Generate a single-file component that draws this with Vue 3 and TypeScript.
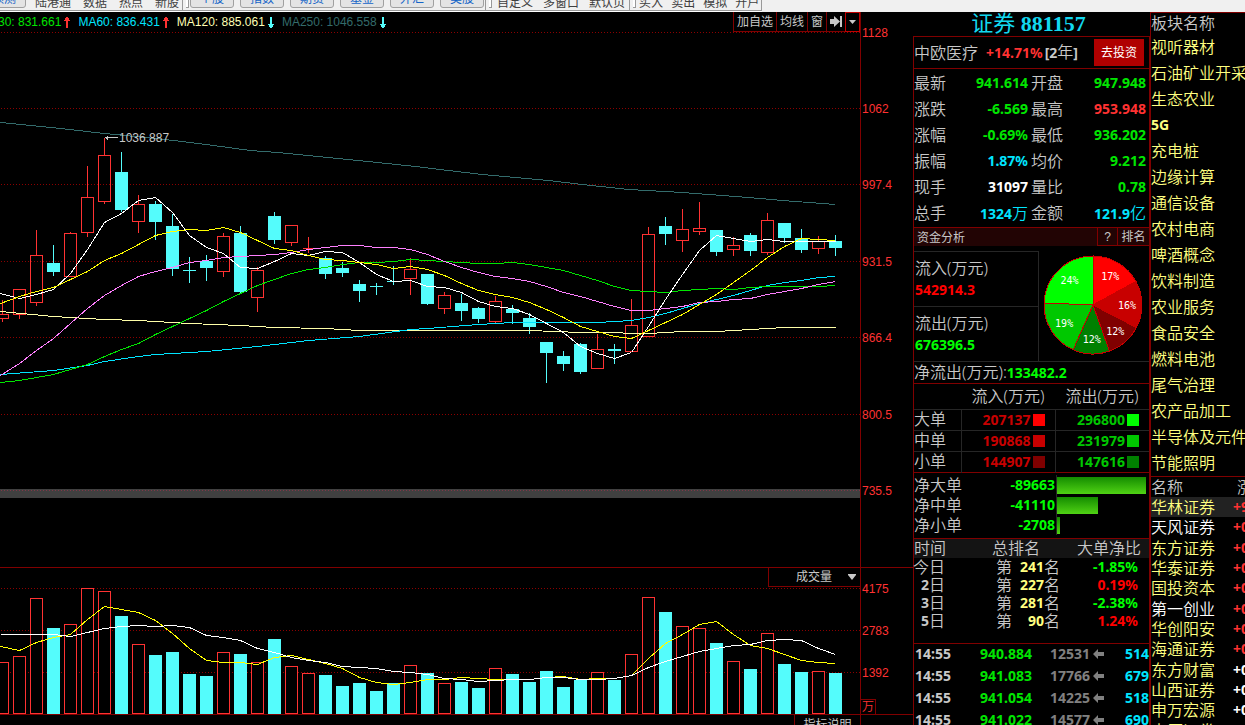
<script setup lang="ts">
type Candle = [high: number, top: number, bottom: number, low: number, up: 0 | 1, volume: number]

interface Line {
  color: string
  points: string
}

const STEP = 17
const FIRST = 2
const VOLUME_BASE = 713
const CHART_WIDTH = 860

const candles: Candle[] = [
  [299, 314, 318, 321, 1, 662], [289, 289, 314, 318, 1, 656], [229, 255, 302, 305, 1, 598],
  [244, 263, 272, 275, 0, 628], [231, 233, 276, 276, 1, 624], [165, 197, 232, 236, 1, 588],
  [137, 155, 201, 203, 1, 591], [151, 172, 210, 211, 0, 616], [194, 204, 221, 232, 1, 644],
  [200, 204, 222, 239, 0, 655], [213, 226, 269, 275, 0, 652], [256, 270, 271, 282, 0, 674],
  [254, 261, 268, 280, 0, 676], [232, 236, 271, 276, 1, 652], [225, 233, 292, 292, 0, 654],
  [266, 270, 297, 311, 1, 662], [211, 216, 240, 243, 0, 639], [225, 225, 242, 245, 1, 666],
  [236, 248, 248, 252, 1, 673], [255, 258, 274, 278, 0, 675], [261, 268, 273, 276, 0, 686],
  [279, 284, 291, 301, 0, 683], [282, 286, 287, 294, 0, 691], [265, 281, 282, 284, 0, 683],
  [257, 269, 278, 294, 1, 665], [274, 274, 304, 304, 0, 673], [291, 295, 308, 313, 1, 683],
  [293, 303, 311, 320, 0, 682], [306, 308, 319, 322, 0, 688], [295, 301, 321, 323, 1, 668],
  [304, 309, 313, 323, 0, 674], [312, 318, 327, 333, 0, 682], [342, 342, 353, 382, 0, 671],
  [350, 356, 364, 370, 0, 687], [342, 344, 372, 373, 0, 680], [333, 349, 368, 368, 1, 672],
  [343, 349, 351, 363, 0, 680], [298, 325, 351, 351, 1, 654], [226, 234, 336, 336, 1, 597],
  [216, 226, 234, 244, 0, 612], [208, 229, 240, 251, 1, 626], [201, 228, 231, 234, 1, 628],
  [229, 230, 252, 255, 0, 643], [236, 245, 249, 255, 1, 661], [232, 235, 251, 255, 0, 669],
  [212, 220, 252, 254, 1, 633], [223, 223, 238, 242, 0, 664], [228, 238, 250, 252, 0, 672],
  [235, 241, 248, 253, 1, 671], [234, 241, 248, 255, 0, 673],
]

const centre = (i: number): number => FIRST + STEP * i

function series(values: number[]): string {
  return values.map((y, i) => `${i === 0 ? 0 : centre(i)},${y}`).join(' ')
}

const priceLines: Line[] = [
  { color: '#336b6b', points: '0,122 60,128 104,133 155,138 182,141 213,145 250,150 277,152 317,156 347,159 377,162 415,166 448,170 482,174 515,177 548,180 582,184 628,189 682,192 748,197 782,200 835,204' },
  { color: '#ffffa8', points: '0,311 53,316 104,319 138,320 189,323 240,325 274,327 325,328 359,330 529,330 580,332 614,332 631,333 648,333 682,331 716,331 750,329 784,327 835,327' },
  { color: '#00e5ff', points: '0,374 53,370 87,365 104,361 138,356 155,354 206,351 257,346 308,340 359,336 410,329 427,328 478,324 512,322 597,322 614,321 631,320 648,317 665,313 682,308 699,303 716,299 733,295 750,290 767,285 784,282 801,280 818,277 835,276' },
  { color: '#00e600', points: series([382, 380, 377, 374, 369, 364, 356, 349, 343, 334, 326, 318, 310, 301, 293, 285, 279, 273, 269, 267, 264, 262, 262, 261, 259, 260, 261, 262, 263, 263, 262, 264, 267, 270, 275, 280, 286, 290, 291, 292, 290, 289, 288, 289, 287, 286, 286, 286, 286, 285]) },
  { color: '#ff80ff', points: series([375, 363, 350, 338, 323, 308, 295, 285, 276, 271, 267, 262, 260, 257, 256, 255, 254, 252, 249, 247, 245, 245, 247, 247, 249, 254, 261, 267, 272, 276, 278, 281, 286, 292, 296, 301, 306, 310, 310, 308, 306, 302, 301, 299, 298, 294, 291, 288, 284, 281]) },
  { color: '#ffffff', points: series([293, 298, 294, 289, 273, 249, 222, 213, 200, 197, 212, 235, 247, 253, 267, 268, 261, 253, 255, 251, 252, 262, 274, 281, 280, 286, 287, 292, 301, 306, 308, 314, 323, 332, 346, 353, 358, 352, 326, 299, 274, 250, 235, 238, 241, 239, 241, 241, 241, 241]) },
  { color: '#ffff00', points: series([303, 296, 291, 287, 279, 271, 260, 253, 244, 235, 231, 229, 230, 227, 232, 240, 248, 250, 255, 259, 260, 262, 264, 268, 266, 269, 275, 283, 290, 294, 297, 302, 309, 317, 326, 331, 336, 338, 330, 322, 314, 304, 294, 282, 270, 257, 246, 238, 239, 240]) },
]

const volumeLines: Line[] = [
  { color: '#ffff00', points: series([646, 650, 642, 637, 634, 619, 606, 609, 612, 620, 633, 648, 660, 662, 662, 664, 657, 655, 659, 663, 668, 677, 682, 684, 682, 679, 679, 677, 678, 679, 679, 679, 677, 676, 679, 678, 678, 675, 658, 643, 634, 624, 621, 634, 645, 648, 654, 660, 662, 663]) },
  { color: '#ffffff', points: series([634, 634, 634, 634, 636, 632, 628, 626, 625, 626, 625, 627, 635, 637, 640, 648, 652, 657, 660, 662, 666, 667, 668, 671, 672, 674, 678, 679, 681, 680, 679, 679, 677, 677, 679, 679, 678, 675, 667, 661, 656, 651, 648, 645, 644, 640, 639, 640, 648, 654]) },
]

const peak = { x: 119, label: '1036.887' }

const priceGrid = [
  { y: 32, label: '1128' }, { y: 108, label: '1062' }, { y: 184, label: '997.4' }, { y: 261, label: '931.5' },
  { y: 337, label: '866.4' }, { y: 414, label: '800.5' }, { y: 490, label: '735.5' },
]
const volumeGrid = [{ y: 588, label: '4175' }, { y: 630, label: '2783' }, { y: 672, label: '1392' }]

const legend = [
  { text: 'MA30: 831.661', tone: 'ma30', up: true },
  { text: 'MA60: 836.431', tone: 'ma60', up: true },
  { text: 'MA120: 885.061', tone: 'ma120', up: false },
  { text: 'MA250: 1046.558', tone: 'ma250', up: false },
]

const markets = ['个股', '指数', '期货', '基金', '外汇', '美股']

const quotes = [
  { name: '最新', value: '941.614', tone: 'down' }, { name: '开盘', value: '947.948', tone: 'down' },
  { name: '涨跌', value: '-6.569', tone: 'down' }, { name: '最高', value: '953.948', tone: 'up' },
  { name: '涨幅', value: '-0.69%', tone: 'down' }, { name: '最低', value: '936.202', tone: 'down' },
  { name: '振幅', value: '1.87%', tone: 'cyan' }, { name: '均价', value: '9.212', tone: 'down' },
  { name: '现手', value: '31097', tone: 'white' }, { name: '量比', value: '0.78', tone: 'down' },
  { name: '总手', value: '1324', unit: '万', tone: 'cyan' }, { name: '金额', value: '121.9', unit: '亿', tone: 'cyan' },
]

const flows = [
  { name: '大单', inflow: 207137, outflow: 296800, size: 'large' },
  { name: '中单', inflow: 190868, outflow: 231979, size: 'medium' },
  { name: '小单', inflow: 144907, outflow: 147616, size: 'small' },
]

const nets = [
  { name: '净大单', value: 89663 },
  { name: '净中单', value: 41110 },
  { name: '净小单', value: 2708 },
]
const widest = Math.max(...nets.map((n) => n.value))

const ranks = [
  { day: '今', rank: 241, ratio: '-1.85%' },
  { day: '2', rank: 227, ratio: '0.19%' },
  { day: '3', rank: 281, ratio: '-2.38%' },
  { day: '5', rank: 90, ratio: '1.24%' },
]

const ticks = [
  { price: '940.884', volume: 12531, count: 514 },
  { price: '941.083', volume: 17766, count: 679 },
  { price: '941.054', volume: 14225, count: 518 },
  { price: '941.022', volume: 14577, count: 690 },
]

const sectors = ['视听器材', '石油矿业开采', '生态农业', '5G', '充电桩', '边缘计算', '通信设备', '农村电商', '啤酒概念', '饮料制造', '农业服务', '食品安全', '燃料电池', '尾气治理', '农产品加工', '半导体及元件', '节能照明']

const stocks = [
  { name: '华林证券', change: '+9', tone: 'up' }, { name: '天风证券', change: '+0', tone: 'up', plain: true },
  { name: '东方证券', change: '+0', tone: 'up' }, { name: '华泰证券', change: '+0', tone: 'up' },
  { name: '国投资本', change: '+0', tone: 'up' }, { name: '第一创业', change: '+0', tone: 'up', plain: true },
  { name: '华创阳安', change: '+0', tone: 'up' }, { name: '海通证券', change: '+0', tone: 'up' },
  { name: '东方财富', change: '+0', tone: 'white' }, { name: '山西证券', change: '+0', tone: 'white' },
  { name: '申万宏源', change: '+0', tone: 'white' }, { name: '中原证券', change: '+0', tone: 'white' },
]

const shares = [
  { value: 207137, color: '#ff0000' }, { value: 190868, color: '#c80000' }, { value: 144907, color: '#800000' },
  { value: 147616, color: '#008000' }, { value: 231979, color: '#00c800' }, { value: 296800, color: '#00ff00' },
]
const total = shares.reduce((sum, s) => sum + s.value, 0)
const polar = (fraction: number, radius: number): [number, number] => [
  50 + radius * Math.sin(fraction * 2 * Math.PI),
  50 - radius * Math.cos(fraction * 2 * Math.PI),
]
let turned = 0
const slices = shares.map((s) => {
  const part = s.value / total
  const [x1, y1] = polar(turned, 49)
  const [x2, y2] = polar(turned + part, 49)
  const [lx, ly] = polar(turned + part / 2, 34)
  turned += part
  return { color: s.color, d: `M50 50L${x1} ${y1}A49 49 0 0 1 ${x2} ${y2}Z`, lx, ly, label: `${Math.round(part * 100)}%` }
})
</script>

<template>
  <div class="app">
    <header class="toolbar">
      <nav class="strip">
        <button class="market">预测</button>
        <div class="group pages">
          <a href="#">陆港通</a><a href="#">数据</a><a href="#">热点</a><a href="#">新股</a>
        </div>
        <i class="handle"></i>
        <div class="group markets">
          <button v-for="m in markets" :key="m" class="market">{{ m }}</button>
        </div>
        <i class="handle"></i>
        <div class="group views">
          <a href="#">自定义</a><a href="#">多窗口</a><a href="#">默认页</a>
        </div>
        <i class="handle"></i>
        <div class="group trade">
          <a href="#">买入</a><a href="#">卖出</a><a href="#">模拟</a><a href="#">开户</a>
        </div>
      </nav>
    </header>

    <main class="workspace">
      <section class="charts">
        <div class="pane price">
          <div class="plot">
            <svg viewBox="0 12 860 555" preserveAspectRatio="none" shape-rendering="crispEdges">
              <rect x="0" y="489" width="860" height="9" fill="#404040" />
              <g transform="translate(.5 .5)" fill="none">
                <line v-for="g in priceGrid" :key="g.y" x1="0" x2="860" :y1="g.y" :y2="g.y" stroke="#8c0000" stroke-dasharray="1 2" />
                <line x1="0" x2="860" y1="490" y2="490" stroke="#803848" stroke-dasharray="1 2" />
                <polyline :points="priceLines[0].points" :stroke="priceLines[0].color" />
                <g v-for="(c, i) in candles" :key="i" :stroke="c[4] ? '#ff3232' : '#54fcfc'">
                  <template v-if="c[4]">
                    <line :x1="centre(i)" :x2="centre(i)" :y1="c[0]" :y2="c[1]" />
                    <line :x1="centre(i)" :x2="centre(i)" :y1="c[2]" :y2="c[3]" />
                    <rect v-if="c[2] > c[1]" :x="centre(i) - 6" :y="c[1]" width="12" :height="c[2] - c[1]" />
                    <line v-else :x1="centre(i) - 6" :x2="centre(i) + 6" :y1="c[1]" :y2="c[1]" />
                  </template>
                  <template v-else>
                    <line :x1="centre(i)" :x2="centre(i)" :y1="c[0]" :y2="c[3]" />
                    <rect :x="centre(i) - 6.5" :y="c[1] - 0.5" width="13" :height="c[2] - c[1]" fill="#54fcfc" stroke="none" />
                  </template>
                </g>
                <polyline v-for="l in priceLines.slice(1)" :key="l.color" :points="l.points" :stroke="l.color" />
                <path d="M104 137H117M106 136V138M107 135V139" stroke="#c8c8c8" />
              </g>
            </svg>
            <span class="peak" :style="{ left: (peak.x / CHART_WIDTH) * 100 + '%' }">{{ peak.label }}</span>
            <div class="legend">
              <span v-for="m in legend" :key="m.text" :class="['ma', m.tone]">
                {{ m.text }}
                <svg width="6" height="11" viewBox="0 0 6 11" shape-rendering="crispEdges" :fill="m.up ? '#ff3232' : '#54fcfc'">
                  <path v-if="m.up" d="M2 0H4V1H5V3H6V4H4V11H2V4H0V3H1V1H2Z" />
                  <path v-else d="M2 11H4V10H5V8H6V7H4V0H2V7H0V8H1V10H2Z" />
                </svg>
              </span>
            </div>
            <div class="tools">
              <button>加自选</button>
              <button>均线</button>
              <button>窗</button>
              <button aria-label="移到最新">
                <svg width="12" height="11" viewBox="0 0 12 11" fill="#c8c8c8"><path d="M0 3H4V0L10 5.500L4 11V8H0ZM10 0H12V11H10Z" /></svg>
              </button>
              <button class="more" aria-label="更多">
                <svg width="7" height="4" viewBox="0 0 7 4" fill="#c8c8c8"><path d="M0 0H7L3.500 4Z" /></svg>
              </button>
            </div>
          </div>
          <svg class="axis" viewBox="861 12 52 555">
            <text v-for="g in priceGrid" :key="g.y" x="862" :y="g.y + 5">{{ g.label }}</text>
          </svg>
        </div>

        <div class="pane volume">
          <div class="plot">
            <svg viewBox="0 568 860 146" preserveAspectRatio="none" shape-rendering="crispEdges">
              <g transform="translate(.5 .5)" fill="none">
                <line v-for="g in volumeGrid" :key="g.y" x1="0" x2="860" :y1="g.y" :y2="g.y" stroke="#8c0000" stroke-dasharray="1 2" />
                <template v-for="(c, i) in candles" :key="i">
                  <rect v-if="c[4]" :x="centre(i) - 6" :y="c[5]" width="12" :height="VOLUME_BASE - c[5]" stroke="#ff3232" fill="#000" />
                  <rect v-else :x="centre(i) - 6.5" :y="c[5] - 0.5" width="13" :height="VOLUME_BASE + 1 - c[5]" fill="#54fcfc" />
                </template>
                <polyline v-for="l in volumeLines" :key="l.color" :points="l.points" :stroke="l.color" />
              </g>
            </svg>
            <button class="indicator">
              成交量
              <svg width="8" height="6" viewBox="0 0 8 6" fill="#c8c8c8"><path d="M0 0H8V1L4 6L0 1Z" /></svg>
            </button>
          </div>
          <div class="scale">
            <svg class="axis" viewBox="861 568 52 146">
              <text v-for="g in volumeGrid" :key="g.y" x="862" :y="g.y + 5">{{ g.label }}</text>
            </svg>
            <span class="unit">万</span>
          </div>
        </div>

        <div class="pane notes">
          <div class="plot"><button class="explain">指标说明</button></div>
          <div class="axis"></div>
        </div>
      </section>

      <section class="quote">
        <h1>证券 <b>881157</b></h1>
        <div class="frame">
          <div class="fund">
            <span>中欧医疗</span>
            <b class="num up">+14.71%</b>
            <b class="num">[2<span>年</span>]</b>
            <button>去投资</button>
          </div>

          <dl class="quotes">
            <div v-for="q in quotes" :key="q.name">
              <dt>{{ q.name }}</dt>
              <dd :class="['num', q.tone]">{{ q.value }}<span v-if="q.unit">{{ q.unit }}</span></dd>
            </div>
          </dl>

          <div class="caption">
            <h2>资金分析</h2>
            <button class="help">?</button>
            <button class="ranking">排名</button>
          </div>

          <div class="capital">
            <div class="sums">
              <div><span>流入(万元)</span><b class="num in">542914.3</b></div>
              <div><span>流出(万元)</span><b class="num out">676396.5</b></div>
            </div>
            <svg class="pie" width="100" height="100" viewBox="0 0 100 100">
              <path v-for="s in slices" :key="s.color" :d="s.d" :fill="s.color" stroke="#c80000" shape-rendering="crispEdges" />
              <text v-for="s in slices" :key="s.color" :x="s.lx" :y="s.ly + 4" text-anchor="middle">{{ s.label }}</text>
            </svg>
          </div>
          <p class="balance">净流出(万元):<b class="num out">133482.2</b></p>

          <table class="flow">
            <thead>
              <tr><th></th><th>流入(万元)</th><th>流出(万元)</th></tr>
            </thead>
            <tbody>
              <tr v-for="f in flows" :key="f.name" :class="f.size">
                <th>{{ f.name }}</th>
                <td class="num inflow">{{ f.inflow }}<i></i></td>
                <td class="num outflow">{{ f.outflow }}<i></i></td>
              </tr>
            </tbody>
          </table>

          <div class="nets">
            <div v-for="n in nets" :key="n.name" class="net">
              <span>{{ n.name }}</span>
              <b class="num out">-{{ n.value }}</b>
              <div class="track"><i :style="{ width: (n.value / widest) * 100 + '%' }"></i></div>
            </div>
          </div>

          <table class="ranks">
            <thead>
              <tr><th>时间</th><th>总排名</th><th>大单净比</th></tr>
            </thead>
            <tbody>
              <tr v-for="r in ranks" :key="r.day">
                <th><span class="day"><b class="num">{{ r.day }}</b>日</span></th>
                <td><span class="place">第<b class="num">{{ r.rank }}</b>名</span></td>
                <td :class="['num', r.ratio.startsWith('-') ? 'out' : 'in']">{{ r.ratio }}</td>
              </tr>
            </tbody>
          </table>

          <table class="ticks">
            <tbody>
              <tr v-for="t in ticks" :key="t.price" class="num">
                <td>14:55</td>
                <td class="down">{{ t.price }}</td>
                <td class="lots">{{ t.volume }}</td>
                <td class="side"><svg width="11" height="10" viewBox="0 0 11 10" fill="#808080"><path d="M0 5L5 0V3H11V7H5V10Z" /></svg></td>
                <td class="cyan">{{ t.count }}</td>
              </tr>
            </tbody>
          </table>
        </div>
      </section>

      <aside class="lists">
        <h2>板块名称</h2>
        <ul class="sectors">
          <li v-for="s in sectors" :key="s" :class="{ num: s === '5G' }">{{ s }}</li>
        </ul>
        <table class="stocks">
          <thead>
            <tr><th>名称</th><th>涨</th></tr>
          </thead>
          <tbody>
            <tr v-for="s in stocks" :key="s.name">
              <td :class="{ white: s.plain }">{{ s.name }}</td>
              <td :class="['num', s.tone]">{{ s.change }}</td>
            </tr>
          </tbody>
        </table>
      </aside>
    </main>
  </div>
</template>

<style>
body {
  background: #000;
}
</style>

<style scoped>
* {
  box-sizing: border-box;
}
.app {
  height: 100vh;
  display: flex;
  flex-direction: column;
  overflow: hidden;
  background: #000;
  color: #c8c8c8;
  font: 350 16px/20px "Noto Sans", "Noto Sans CJK SC", sans-serif;
  white-space: nowrap;
}
button {
  border: 0;
  padding: 0;
  background: none;
  color: inherit;
  font: 400 12px/16px "Liberation Sans", "Noto Sans CJK SC", sans-serif;
}
svg {
  display: block;
  flex: none;
}
h1, h2, dl, dd, p, ul {
  margin: 0;
  padding: 0;
}
th {
  font-weight: 350;
}
table {
  width: 100%;
  table-layout: fixed;
  border-collapse: collapse;
}
th, td {
  padding: 0;
}
.num {
  font-family: "Noto Sans", "Noto Sans CJK SC", sans-serif;
  font-size: 14px;
  font-weight: 700;
}
.num span {
  font-size: 16px;
  font-weight: 350;
}
.up { color: #ff3232; }
.down { color: #00e600; }
.cyan { color: #00e5ff; }
.white { color: #fff; }
.in { color: #ff0000; }
.out { color: #00ff00; }

/* toolbar */
.toolbar {
  flex: none;
  height: 12px;
  display: flex;
  align-items: flex-end;
  overflow: hidden;
  background: #f0f0f0;
  color: #404040;
}
.strip {
  display: flex;
  height: 24px;
  margin-left: -18px;
  padding-bottom: 2px;
  box-shadow: inset 0 -1px #fff, inset 0 -2px #999;
}
.group {
  display: flex;
  align-items: flex-end;
  border-right: 1px solid #999;
}
.group a {
  color: inherit;
  text-decoration: none;
  font: 400 12px/16px "Noto Sans CJK SC", sans-serif;
}
.pages { gap: 12px; padding: 0 3px 0 9px; }
.markets { gap: 6px; padding: 0 1px 0 1px; align-items: flex-start; }
.views { gap: 10px; padding: 0 4px 0 5px; }
.trade { gap: 8px; padding: 0 2px 0 3px; }
.handle {
  width: 3px;
  height: 20px;
  margin-left: 3px;
  border: solid #999;
  border-width: 0 1px 1px 0;
  background: #fff;
}
.market {
  width: 44px;
  height: 20px;
  border: 1px solid #a0a0a0;
  border-radius: 3px;
  background: #e4e4e4;
  color: #1464c8;
  font: 400 12px/18px "Noto Sans CJK SC", sans-serif;
}

/* charts */
.workspace {
  flex: 1;
  min-height: 0;
  display: flex;
}
.charts {
  flex: 1;
  min-width: 0;
  display: flex;
  flex-direction: column;
}
.pane {
  display: flex;
  border-bottom: 1px solid #800000;
}
.pane.notes {
  flex: 1;
  border: 0;
}
.plot {
  position: relative;
  flex: 1;
  min-width: 0;
  overflow: hidden;
}
.plot > svg {
  width: 100%;
}
.price .plot > svg { height: 555px; }
.volume .plot > svg { height: 146px; }
.axis {
  width: 53px;
  border-left: 1px solid #800000;
  fill: #ff3232;
  font: 12px "Liberation Sans", sans-serif;
}
.price .axis { height: 555px; }
.volume .axis { height: 146px; }
.scale { position: relative; }
.unit {
  position: absolute;
  left: 0;
  bottom: 0;
  width: 16px;
  height: 15px;
  border: 1px solid #800000;
  border-bottom: 0;
  color: #ff3232;
  font-size: 12px;
  line-height: 14px;
  text-align: center;
}
.peak {
  position: absolute;
  top: 118px;
  font: 12px/16px "Liberation Sans", sans-serif;
}
.legend {
  position: absolute;
  top: 2px;
  left: -20px;
  display: flex;
  gap: 8px;
  font: 12px/16px "Liberation Sans", sans-serif;
}
.ma {
  display: flex;
  align-items: center;
  gap: 3px;
}
.ma30 { color: #00e600; }
.ma60 { color: #00e5ff; }
.ma120 { color: #ffffb4; }
.ma250 { color: #336b6b; }
.tools {
  position: absolute;
  top: 0;
  right: 0;
  display: flex;
  height: 20px;
  background: #000;
  border-bottom: 1px solid #800000;
}
.tools button {
  display: flex;
  align-items: center;
  justify-content: center;
  padding: 0 3px;
  border-left: 1px solid #800000;
}
.tools .more {
  width: 15px;
  height: 20px;
  border: 1px solid #c00000;
}
.indicator {
  position: absolute;
  top: 0;
  right: 0;
  display: flex;
  align-items: center;
  justify-content: flex-end;
  gap: 16px;
  width: 92px;
  height: 19px;
  padding-right: 4px;
  border: solid #800000;
  border-width: 0 0 1px 1px;
  background: #000;
}
.explain {
  position: absolute;
  top: 0;
  right: 0;
  width: 66px;
  height: 19px;
  border-left: 1px solid #800000;
}

/* quote panel */
.quote {
  flex: none;
  width: 237px;
  overflow: hidden;
}
h1 {
  height: 24px;
  color: #12d8f0;
  font: 400 22px/24px "Liberation Serif", "Noto Sans CJK SC", serif;
  text-align: center;
  padding-right: 6px;
}
.frame {
  border: 1px solid #800000;
  border-bottom: 0;
}
.fund {
  display: flex;
  align-items: center;
  height: 32px;
  padding-right: 5px;
  border-bottom: 1px solid #800000;
}
.fund .up { margin: 0 2px 0 8px; }
.fund button {
  width: 50px;
  height: 27px;
  margin-left: auto;
  background: #b00000;
  color: #fff;
}
.quotes {
  display: grid;
  grid-template-columns: 117px 1fr;
  padding: 1px 0;
  border-bottom: 1px solid #800000;
}
.quotes div {
  display: flex;
  justify-content: space-between;
  height: 26px;
  padding-right: 3px;
  line-height: 26px;
}
.caption {
  display: flex;
  height: 18px;
  background: #220404;
}
.caption h2 {
  flex: 1;
  padding-left: 3px;
  font: 400 12px/17px "Noto Sans CJK SC", sans-serif;
}
.caption button {
  width: 20px;
  border: solid #800000;
  border-width: 0 0 1px 1px;
}
.caption .ranking { width: 32px; }
.capital {
  display: flex;
  align-items: flex-end;
  padding-top: 5px;
  border-bottom: 1px solid #262626;
}
.sums {
  width: 125px;
  border-right: 1px solid #262626;
}
.sums div {
  display: flex;
  flex-direction: column;
  height: 55px;
  padding: 4px 0 0 1px;
  border-top: 1px solid #262626;
}
.sums span { line-height: 24px; }
.pie {
  margin: 0 0 6px 4px;
}
.pie text {
  fill: #fff;
  font: 10px "DejaVu Sans Mono", monospace;
}
.balance {
  height: 22px;
  line-height: 21px;
  border-bottom: 1px solid #800000;
}
.flow {
  border-bottom: 1px solid #800000;
}
.flow th:first-child { width: 47px; text-align: left; }
.flow th:last-child { width: 94px; }
.flow thead th { height: 25px; }
.flow tbody th, .flow tbody td {
  height: 21px;
  line-height: 19px;
  border-top: 1px solid #262626;
}
.flow tbody td {
  padding-right: 10px;
  border-left: 1px solid #262626;
  text-align: right;
}
.flow i {
  display: inline-block;
  width: 12px;
  height: 12px;
  margin-left: 2px;
  vertical-align: -1px;
  background: currentColor;
}
.inflow { color: #c80000; }
.outflow { color: #00c800; }
.large .inflow i { background: #ff0000; }
.large .outflow i { background: #00ff00; }
.small .inflow i { background: #800000; }
.small .outflow i { background: #008000; }
.nets {
  padding: 2px 3px 3px 0;
  border-bottom: 1px solid #800000;
}
.net {
  display: flex;
  align-items: center;
  height: 20px;
}
.net b {
  flex: 1;
  padding-right: 1px;
  text-align: right;
}
.track {
  width: 90px;
  height: 20px;
  padding: 2px 0 1px;
  border-left: 1px solid #262626;
}
.track i {
  display: block;
  height: 17px;
  background: linear-gradient(#148c00, #50d214);
}
.ranks thead { background: #141414; }
.ranks thead th { height: 19px; line-height: 19px; }
.ranks th:first-child { width: 48px; text-align: left; }
.ranks th:nth-child(2) { width: 98px; padding-left: 10px; }
.ranks th:last-child { padding: 0 8px 0 0; text-align: right; }
.ranks tbody th, .ranks tbody td { height: 18px; line-height: 18px; text-align: right; }
.ranks tbody th { padding-right: 17px; }
.ranks tbody td:last-child { padding-right: 11px; }
.ranks tr:first-child th .num { font-size: 16px; font-weight: 350; }
.day, .place {
  display: flex;
  justify-content: flex-end;
}
.place b {
  width: 32px;
  text-align: right;
  color: #ffff80;
}
.ticks {
  margin-top: 13px;
  border-top: 1px solid #800000;
}
.ticks td { height: 22px; line-height: 20px; text-align: right; }
.ticks td:first-child { width: 37px; }
.ticks td:nth-child(2) { width: 81px; }
.ticks td:nth-child(3) { width: 58px; }
.ticks .side { width: 14px; padding-left: 3px; }
.lots { color: #808080; }

/* sector and stock lists */
.lists {
  flex: none;
  width: 95px;
  overflow: hidden;
  border: solid #800000;
  border-width: 1px 0 0 1px;
  color: #ffff80;
}
.lists h2 {
  color: #c8c8c8;
  font-size: 16px;
  font-weight: 350;
  line-height: 21px;
}
.sectors {
  list-style: none;
  border-bottom: 1px solid #800000;
}
.sectors li {
  line-height: 26px;
}
.stocks th { height: 20px; line-height: 19px; color: #c8c8c8; text-align: left; }
.stocks th:first-child { width: 82px; }
.stocks th:last-child { padding-left: 4px; }
.stocks td { height: 20px; line-height: 20px; }
.stocks tbody tr:nth-child(3n) td { height: 21px; }
.stocks tbody tr:first-child { background: #222; }
</style>
